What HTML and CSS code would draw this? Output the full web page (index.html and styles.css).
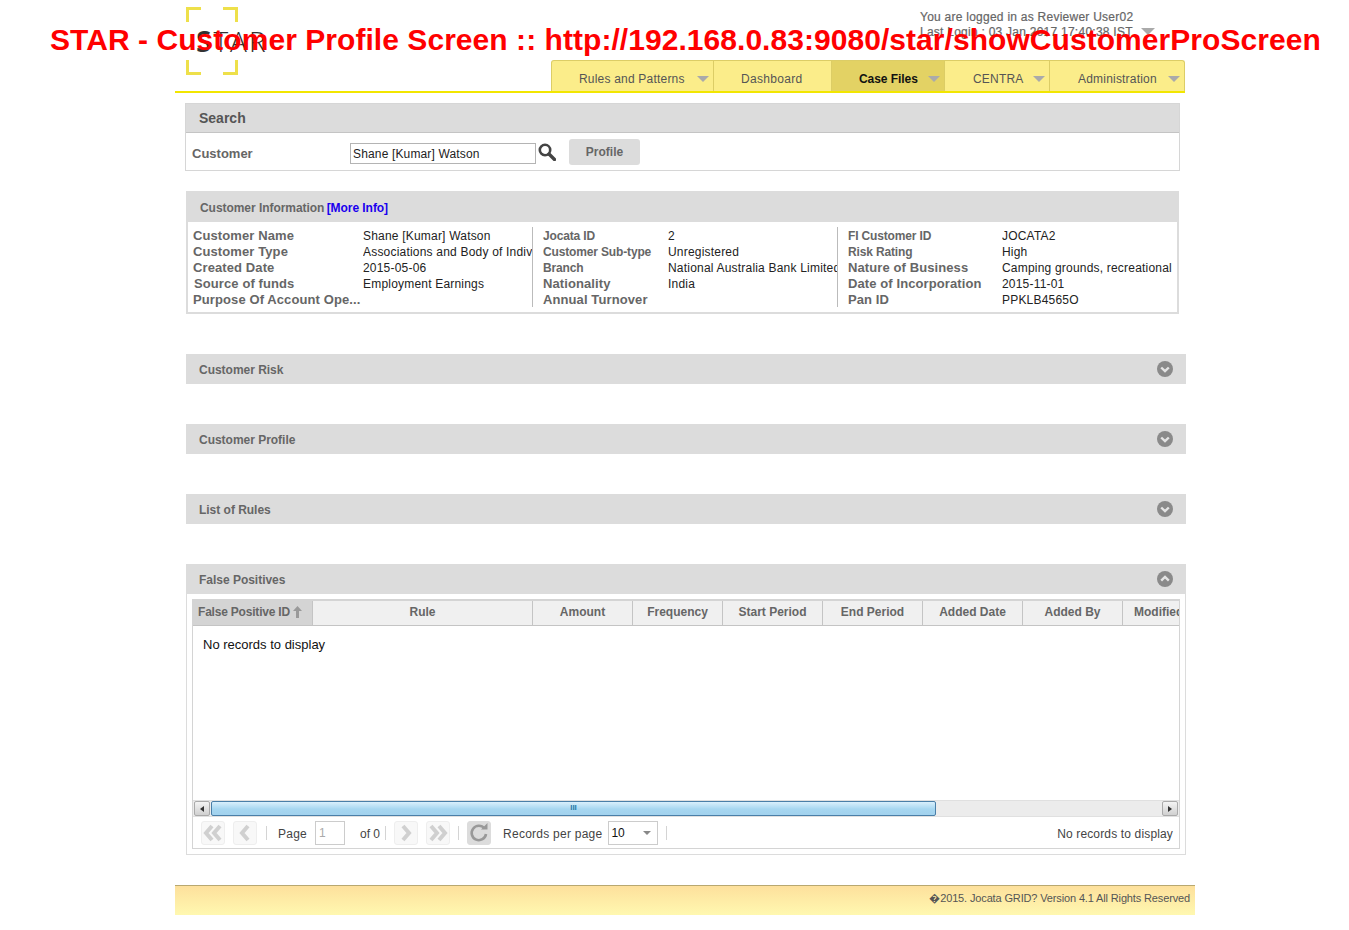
FILE: index.html
```html
<!DOCTYPE html>
<html lang="en">
<head>
    <meta charset="UTF-8">
    <title>STAR - Customer Profile</title>
    <link rel="stylesheet" href="styles.css">
</head>
<body>
    <div class="banner">STAR - Customer Profile Screen :: http://192.168.0.83:9080/star/showCustomerProScreen</div>

    <div class="wrapper">
        <header class="header">
            <div class="logo">
                <span class="corner tl"></span><span class="corner tr"></span>
                <span class="corner bl"></span><span class="corner br"></span>
                <span class="logo-text"><b>S</b>TAR</span>
            </div>
            <div class="header-right">
                <div class="user-info">
                    <div>You are logged in as Reviewer User02</div>
                    <div>Last Login : 03 Jan 2017 17:40:38 IST <i class="caret user-caret"></i></div>
                </div>
                <nav class="menu">
                    <a class="menu-item w-rules">Rules and Patterns <i class="caret"></i></a>
                    <a class="menu-item w-dash">Dashboard</a>
                    <a class="menu-item w-case active">Case Files <i class="caret"></i></a>
                    <a class="menu-item w-centra">CENTRA <i class="caret"></i></a>
                    <a class="menu-item w-admin">Administration <i class="caret"></i></a>
                </nav>
            </div>
        </header>

        <section class="search-panel">
            <h3>Search</h3>
            <div class="search-row">
                <label>Customer</label>
                <input class="search-input" type="text" value="Shane [Kumar] Watson">
                <svg class="search-icon" width="18" height="18" viewBox="0 0 18 18"><circle cx="7" cy="7" r="5.2" fill="none" stroke="#444" stroke-width="2.6"/><path d="M11 11l5.5 5.5" stroke="#444" stroke-width="3.4" stroke-linecap="round"/></svg>
                <button class="profile-btn">Profile</button>
            </div>
        </section>

        <section class="info-panel">
            <h4>Customer Information <a class="more-link">[More Info]</a></h4>
            <div class="info-body">
                <div class="info-col col-1">
                    <span class="lbl big">Customer Name</span><span class="val">Shane [Kumar] Watson</span>
                    <span class="lbl big">Customer Type</span><span class="val">Associations and Body of Individuals</span>
                    <span class="lbl big">Created Date</span><span class="val">2015-05-06</span>
                    <span class="lbl big nudge">Source of funds</span><span class="val">Employment Earnings</span>
                    <span class="lbl big">Purpose Of Account Ope...</span><span class="val"></span>
                </div>
                <div class="info-col col-2">
                    <span class="lbl">Jocata ID</span><span class="val">2</span>
                    <span class="lbl">Customer Sub-type</span><span class="val">Unregistered</span>
                    <span class="lbl">Branch</span><span class="val">National Australia Bank Limited</span>
                    <span class="lbl big">Nationality</span><span class="val">India</span>
                    <span class="lbl big">Annual Turnover</span><span class="val"></span>
                </div>
                <div class="info-col col-3">
                    <span class="lbl">FI Customer ID</span><span class="val">JOCATA2</span>
                    <span class="lbl">Risk Rating</span><span class="val">High</span>
                    <span class="lbl big">Nature of Business</span><span class="val">Camping grounds, recreational</span>
                    <span class="lbl big">Date of Incorporation</span><span class="val">2015-11-01</span>
                    <span class="lbl big">Pan ID</span><span class="val">PPKLB4565O</span>
                </div>
            </div>
        </section>

        <div class="bar first-bar">Customer Risk
            <svg class="toggle" width="16" height="16" viewBox="0 0 16 16"><circle cx="8" cy="8" r="8" fill="#8a8a8a"/><path d="M4.2 6.5L8 10.2l3.8-3.7" fill="none" stroke="#e4e4e4" stroke-width="2.4"/></svg>
        </div>
        <div class="bar">Customer Profile
            <svg class="toggle" width="16" height="16" viewBox="0 0 16 16"><circle cx="8" cy="8" r="8" fill="#8a8a8a"/><path d="M4.2 6.5L8 10.2l3.8-3.7" fill="none" stroke="#e4e4e4" stroke-width="2.4"/></svg>
        </div>
        <div class="bar">List of Rules
            <svg class="toggle" width="16" height="16" viewBox="0 0 16 16"><circle cx="8" cy="8" r="8" fill="#8a8a8a"/><path d="M4.2 6.5L8 10.2l3.8-3.7" fill="none" stroke="#e4e4e4" stroke-width="2.4"/></svg>
        </div>

        <section class="fp-panel">
            <div class="bar fp-bar">False Positives
                <svg class="toggle" width="16" height="16" viewBox="0 0 16 16"><circle cx="8" cy="8" r="8" fill="#8a8a8a"/><path d="M4.2 9.7L8 6l3.8 3.7" fill="none" stroke="#e4e4e4" stroke-width="2.4"/></svg>
            </div>
            <div class="grid">
                <div class="grid-head">
                    <div class="th sorted c-id">False Positive ID
                        <svg width="9" height="12" viewBox="0 0 9 12"><path d="M4.5 0L9 5H6v7H3V5H0z" fill="#999"/></svg>
                    </div>
                    <div class="th c-rule">Rule</div>
                    <div class="th c-100">Amount</div>
                    <div class="th c-90">Frequency</div>
                    <div class="th c-100">Start Period</div>
                    <div class="th c-100">End Period</div>
                    <div class="th c-100">Added Date</div>
                    <div class="th c-100">Added By</div>
                    <div class="th c-mod">Modified By</div>
                </div>
                <div class="grid-body">No records to display</div>
                <div class="scrollbar">
                    <span class="sb-btn"><i class="arrow-left"></i></span>
                    <div class="sb-track">
                        <div class="sb-thumb"><span class="grip">III</span></div>
                    </div>
                    <span class="sb-btn"><i class="arrow-right"></i></span>
                </div>
                <div class="pager">
                    <span class="pg-btn"><svg width="20" height="18" viewBox="0 0 20 18"><path d="M9 2L3 9l6 7M17 2l-6 7 6 7" fill="none" stroke="#d0d0d0" stroke-width="4"/></svg></span>
                    <span class="pg-btn"><svg width="12" height="18" viewBox="0 0 12 18"><path d="M9 2L3 9l6 7" fill="none" stroke="#d0d0d0" stroke-width="4"/></svg></span>
                    <span class="sep"></span>
                    <span class="pg-text page-label">Page</span>
                    <input class="pg-input" type="text" value="1">
                    <span class="pg-text">of 0</span>
                    <span class="sep sep-after-count"></span>
                    <span class="pg-btn"><svg width="12" height="18" viewBox="0 0 12 18"><path d="M3 2l6 7-6 7" fill="none" stroke="#d0d0d0" stroke-width="4"/></svg></span>
                    <span class="pg-btn"><svg width="20" height="18" viewBox="0 0 20 18"><path d="M3 2l6 7-6 7M11 2l6 7-6 7" fill="none" stroke="#d0d0d0" stroke-width="4"/></svg></span>
                    <span class="sep sep-before-refresh"></span>
                    <span class="pg-btn refresh"><svg width="20" height="20" viewBox="0 0 20 20"><path d="M15.5 5.5A7.2 7.2 0 1 0 17 11" fill="none" stroke="#999" stroke-width="2.6"/><path d="M12 6.5h6.5V0z" fill="#999"/></svg></span>
                    <span class="pg-text rpp">Records per page</span>
                    <span class="pg-select">10<i class="caret"></i></span>
                    <span class="sep"></span>
                    <span class="pg-text pg-status">No records to display</span>
                </div>
            </div>
        </section>

        <footer class="footer">�2015. Jocata GRID? Version 4.1 All Rights Reserved</footer>
    </div>
</body>
</html>
```
FILE: styles.css
```css
* {
    margin: 0;
    padding: 0;
    box-sizing: border-box;
}

:root {
    --panel-grey: #dcdcdc;
    --title-grey: #666;
    --menu-yellow: #fbed8a;
    --menu-active: #e3d264;
    --line-yellow: #f2e600;
}

body {
    background: #fff;
    font-family: "Liberation Sans", Arial, sans-serif;
    font-size: 12px;
    color: #222;
}

/* Red caption burned over the page */
.banner {
    position: absolute;
    left: 50px;
    top: 21px;
    font-size: 30px;
    line-height: 37px;
    font-weight: bold;
    letter-spacing: 0.05px;
    color: #f00;
    white-space: nowrap;
    z-index: 5;
}

.wrapper {
    width: 1020px;
    margin-left: 175px;
}

/* Header */
.header {
    display: flex;
    justify-content: space-between;
    width: 1010px;
    height: 93px;
    border-bottom: 2px solid var(--line-yellow);
}

.logo {
    position: relative;
    width: 64px;
    height: 68px;
    margin: 7px 0 0 11px;
}

.corner {
    position: absolute;
    width: 15px;
    height: 15px;
    border: 0 solid #eee04a;
}

.corner.tl { left: 0; top: 0; border-width: 3px 0 0 3px; }
.corner.tr { left: 37px; top: 0; border-width: 3px 3px 0 0; }
.corner.bl { left: 0; top: 53px; border-width: 0 0 3px 3px; }
.corner.br { left: 37px; top: 53px; border-width: 0 3px 3px 0; }

.logo-text {
    position: absolute;
    left: 10px;
    top: 17px;
    font-size: 28px;
    line-height: 34px;
    letter-spacing: 2px;
    font-family: "Open Sans", sans-serif;
    font-weight: 300;
    color: #333;
}

.logo-text b {
    font-weight: 600;
}

.header-right {
    display: flex;
    flex-direction: column;
    align-items: flex-end;
}

.user-info {
    width: 265px;
    height: 60px;
    padding-top: 10px;
    color: #666;
    line-height: 15px;
    letter-spacing: 0.25px;
}

.user-info div {
    -webkit-text-stroke: 0.2px #666;
}

.caret {
    display: inline-block;
    width: 0;
    height: 0;
    border-left: 6px solid transparent;
    border-right: 6px solid transparent;
    border-top: 6px solid #aaa;
    vertical-align: 1px;
}

.user-caret {
    margin-left: 5px;
    border-left-width: 7px;
    border-right-width: 7px;
    border-top-width: 7px;
}

.menu {
    display: flex;
    height: 31px;
    background: var(--menu-yellow);
    border: 1px solid #dccd66;
    border-bottom: 0;
    border-radius: 3px 3px 0 0;
}

.menu-item {
    display: flex;
    align-items: center;
    justify-content: space-between;
    padding: 5px 4px 0 27px;
    color: #555;
    letter-spacing: 0.2px;
    border-right: 1px solid #dccd66;
}

.menu-item:last-child {
    border-right: 0;
}

.menu-item.active {
    background: var(--menu-active);
    color: #111;
    font-weight: bold;
    letter-spacing: -0.05px;
}

.w-rules { width: 162px; }
.w-dash { width: 118px; letter-spacing: 0.3px; }
.w-case { width: 113px; }
.w-centra { width: 105px; padding-left: 28px; }
.w-admin { width: 134px; padding-left: 28px; }

/* Search */
.search-panel {
    width: 995px;
    height: 68px;
    margin: 10px 0 0 10px;
    border: 1px solid #d6d6d6;
}

.search-panel h3 {
    height: 29px;
    padding: 0 13px;
    font-size: 14px;
    line-height: 29px;
    color: #555;
    background: var(--panel-grey);
    border-bottom: 1px solid #c4c4c4;
}

.search-row {
    display: flex;
    align-items: center;
    height: 37px;
    padding: 4px 0 0 6px;
}

.search-row label {
    width: 158px;
    font-size: 13px;
    font-weight: bold;
    color: #666;
}

.search-input {
    width: 186px;
    height: 21px;
    padding: 0 2px;
    border: 1px solid #b4b4b4;
    font: 12px "Liberation Sans", Arial, sans-serif;
    letter-spacing: 0.15px;
    color: #222;
}

.search-icon {
    margin: -4px 0 0 2px;
}

.profile-btn {
    width: 71px;
    height: 26px;
    margin: -4px 0 0 13px;
    padding-top: 1px;
    border: 0;
    border-radius: 3px;
    background: var(--panel-grey);
    color: #666;
    font: bold 12px "Liberation Sans", Arial, sans-serif;
}

/* Customer information */
.info-panel {
    width: 993px;
    height: 123px;
    margin: 20px 0 0 11px;
    border: 2px solid var(--panel-grey);
    border-top: 0;
}

.info-panel h4 {
    height: 31px;
    margin: 0 -2px;
    padding-left: 14px;
    background: var(--panel-grey);
    font-size: 12px;
    line-height: 35px;
    letter-spacing: -0.05px;
    color: var(--title-grey);
}

.more-link {
    margin-left: -1px;
    letter-spacing: -0.05px;
    color: #1a00ee;
}

.info-body {
    display: flex;
    padding-top: 5px;
}

.info-col {
    display: grid;
    grid-auto-rows: 16px;
    height: 80px;
    overflow: hidden;
}

.col-1 {
    width: 345px;
    padding-left: 5px;
    grid-template-columns: 170px 169px;
    border-right: 1px solid #bbb;
}

.col-2 {
    width: 305px;
    padding-left: 10px;
    grid-template-columns: 125px 169px;
    border-right: 1px solid #bbb;
}

.col-3 {
    width: 339px;
    padding-left: 10px;
    grid-template-columns: 154px 171px;
}

.lbl {
    padding-top: 2px;
    font-weight: bold;
    line-height: 14px;
    letter-spacing: -0.15px;
    color: var(--title-grey);
    white-space: nowrap;
}

.lbl.big {
    font-size: 13px;
    letter-spacing: 0.1px;
}

.lbl.nudge {
    margin-left: 1px;
}

.val {
    padding-top: 2px;
    line-height: 14px;
    letter-spacing: 0.2px;
    white-space: nowrap;
    overflow: hidden;
}

/* Collapsible bars */
.bar {
    position: relative;
    width: 1000px;
    height: 30px;
    margin: 40px 0 0 11px;
    padding-left: 13px;
    background: var(--panel-grey);
    font-weight: bold;
    line-height: 33px;
    letter-spacing: -0.02px;
    color: var(--title-grey);
}

.toggle {
    position: absolute;
    right: 13px;
    top: 7px;
}

.fp-panel {
    width: 1000px;
    height: 291px;
    margin: 40px 0 0 11px;
    border: 1px solid var(--panel-grey);
    border-top: 0;
}

.bar.fp-bar {
    margin: 0 -1px;
}

/* Grid */
.grid {
    width: 988px;
    height: 250px;
    margin: 5px 0 0 5px;
    border: 1px solid #d4d4d4;
    overflow: hidden;
}

.grid-head {
    display: flex;
    height: 26px;
    background: #f0f0f0;
    border-bottom: 1px solid #c4c4c4;
    border-top: 1px solid #d4d4d4;
}

.th {
    flex: none;
    font-weight: bold;
    color: var(--title-grey);
    line-height: 23px;
    text-align: center;
    border-right: 1px solid #c4c4c4;
    white-space: nowrap;
    overflow: hidden;
}

.th.sorted {
    background: #d4d4d4;
    padding-left: 5px;
    letter-spacing: -0.2px;
    text-align: left;
}

.th.sorted svg {
    vertical-align: -2px;
}

.c-id { width: 120px; }
.c-rule { width: 220px; }
.c-100 { width: 100px; }
.c-90 { width: 90px; }
.c-mod {
    width: 90px;
    border-right: 0;
}

.grid-body {
    height: 174px;
    padding: 11px 10px;
    font-size: 13px;
    line-height: 15px;
    color: #111;
}

.scrollbar {
    display: flex;
    height: 17px;
    padding: 0 1px;
    background: #ececec;
    border-top: 1px solid #e0e0e0;
    border-bottom: 1px solid #e0e0e0;
}

.sb-btn {
    display: flex;
    align-items: center;
    justify-content: center;
    flex: none;
    width: 16px;
    height: 15px;
    background: linear-gradient(#f4f4f4, #d0d0d0);
    border: 1px solid #aaa;
    border-radius: 2px;
}

.arrow-left {
    border: 3px solid transparent;
    border-right: 4px solid #333;
    border-left: 0;
}

.arrow-right {
    border: 3px solid transparent;
    border-left: 4px solid #333;
    border-right: 0;
}

.sb-track {
    flex: 1;
    padding-left: 1px;
}

.sb-thumb {
    width: 725px;
    height: 15px;
    background: linear-gradient(#d9effc, #a6d6f0 55%, #a2d2ee);
    border: 1px solid #4a7fa8;
    border-radius: 2px;
    font-size: 8px;
    font-weight: bold;
    line-height: 12px;
    text-align: center;
    color: #2a7aa8;
}

.pager {
    display: flex;
    align-items: center;
    height: 32px;
    padding-left: 8px;
    color: #444;
}

.pg-btn {
    display: flex;
    align-items: center;
    justify-content: center;
    flex: none;
    width: 24px;
    height: 24px;
    margin-right: 8px;
    background: #f8f8f8;
    border: 1px solid #eee;
    border-radius: 3px;
}

.pg-btn.refresh {
    background: var(--panel-grey);
    border-color: #dcdcdc;
}

.sep {
    flex: none;
    width: 1px;
    height: 14px;
    margin: 0 11px 0 1px;
    background: #d4d4d4;
}

.sep.sep-after-count {
    margin: 0 8px 0 5px;
}

.sep.sep-before-refresh {
    margin: 0 8px 0 0;
}

.pg-text {
    padding-top: 2px;
    white-space: nowrap;
}

.page-label {
    letter-spacing: 0.25px;
}

.pg-input {
    width: 30px;
    height: 24px;
    margin: 0 15px 0 8px;
    padding-left: 3px;
    border: 1px solid #ccc;
    color: #aaa;
    font: 12px "Liberation Sans", Arial, sans-serif;
}

.rpp {
    margin-left: 4px;
    letter-spacing: 0.25px;
}

.pg-select {
    display: flex;
    align-items: center;
    justify-content: space-between;
    width: 50px;
    height: 24px;
    margin: 0 7px 0 6px;
    padding: 0 6px 0 2px;
    border: 1px solid #ccc;
    color: #111;
}

.pg-select .caret {
    border-left-width: 4px;
    border-right-width: 4px;
    border-top-width: 4px;
    border-top-color: #888;
}

.pg-status {
    margin-left: auto;
    padding-right: 6px;
    letter-spacing: 0.15px;
}

/* Footer */
.footer {
    height: 30px;
    margin-top: 30px;
    padding: 6px 5px 0 0;
    text-align: right;
    font-size: 11px;
    line-height: 13px;
    letter-spacing: -0.14px;
    color: #555;
    background: linear-gradient(#fde09c, #fff8b0);
    border-top: 1px solid #b8a870;
}
```
